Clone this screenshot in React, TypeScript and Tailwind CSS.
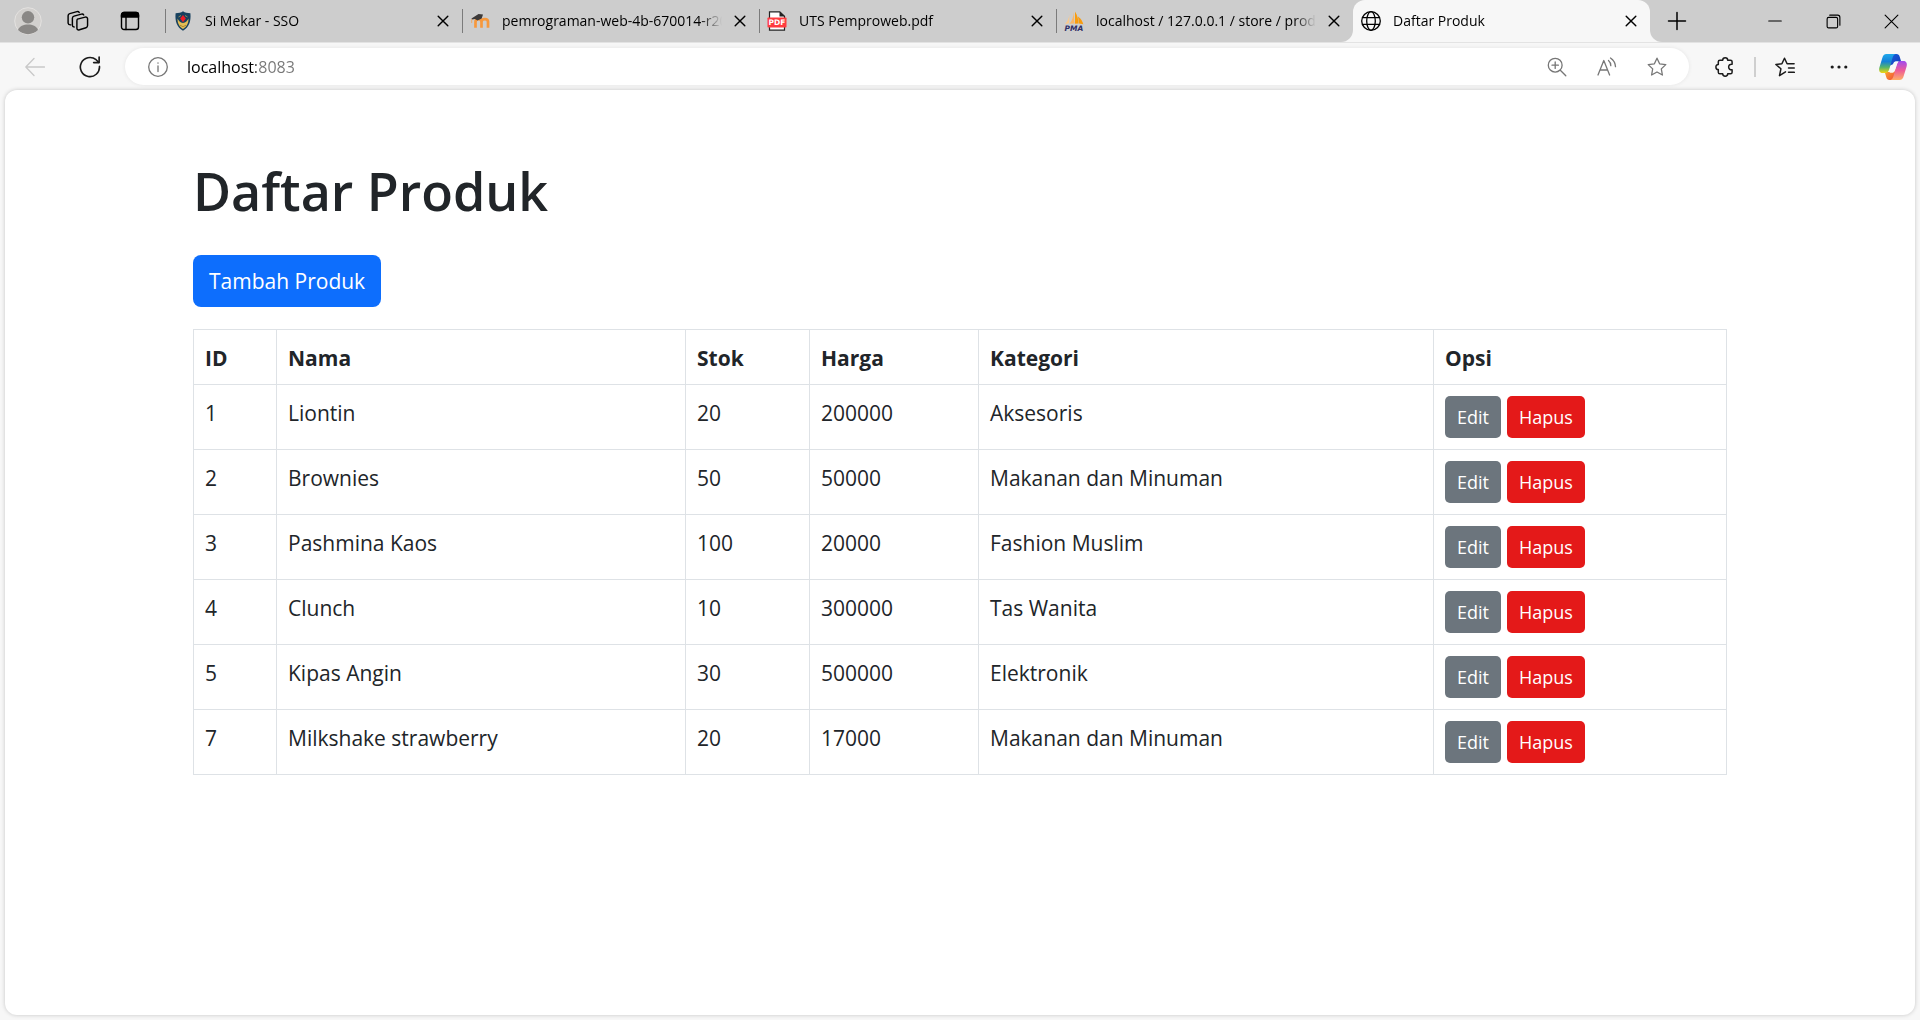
import type { ReactNode } from "react";

type Product = { id: number; name: string; stock: number; price: number; category: string };

const products: Product[] = [
  { id: 1, name: "Liontin", stock: 20, price: 200000, category: "Aksesoris" },
  { id: 2, name: "Brownies", stock: 50, price: 50000, category: "Makanan dan Minuman" },
  { id: 3, name: "Pashmina Kaos", stock: 100, price: 20000, category: "Fashion Muslim" },
  { id: 4, name: "Clunch", stock: 10, price: 300000, category: "Tas Wanita" },
  { id: 5, name: "Kipas Angin", stock: 30, price: 500000, category: "Elektronik" },
  { id: 7, name: "Milkshake strawberry", stock: 20, price: 17000, category: "Makanan dan Minuman" },
];

function Icon({ size = 20, width = 1.4, children }: { size?: number; width?: number; children: ReactNode }) {
  return (
    <svg
      width={size}
      height={size}
      viewBox="0 0 20 20"
      fill="none"
      stroke="currentColor"
      strokeWidth={width}
      strokeLinecap="round"
      strokeLinejoin="round"
      aria-hidden="true"
      className="shrink-0"
    >
      {children}
    </svg>
  );
}

const STAR = "M10 1.2 12.6 6.8 18.8 7.6 14.3 11.9 15.4 18 10 15 4.6 18 5.7 11.9 1.2 7.6 7.4 6.8Z";

function ShieldLogo() {
  return (
    <svg width="20" height="20" viewBox="0 0 20 20" aria-hidden="true" className="shrink-0">
      <path d="M10 .3c2 1.600 4.300 1.900 7.400 1.900.8 8-1.400 14-7.400 17.500C4 16.200 1.800 10.200 2.600 2.200 5.700 2.200 8 1.900 10 .3Z" fill="#17415f" />
      <path d="M4.600 7.500c.8 2 2.700 4.500 5.400 4.500s4.600-2.500 5.400-4.500c.4 4-1.400 8.200-5.400 10.400C6 15.700 4.200 11.500 4.600 7.500Z" fill="#e3bd55" />
      <path d="M5.500 6 8 4.500M14.500 6 12 4.500" stroke="#8d8a5c" strokeWidth="1" />
      <path d="m10 4 2.800 3.600L10 11.200 7.200 7.600Z" fill="#ee1c25" />
      <path d="M7 14.200l3 1.500 3-1.500" stroke="#9b7a2a" strokeWidth=".8" fill="none" />
    </svg>
  );
}

function MoodleLogo() {
  return (
    <svg width="20" height="20" viewBox="0 0 20 20" aria-hidden="true" className="shrink-0">
      <path d="M5.500 16.800v-6c0-3.600 6-3.600 6 0v6M11.500 10.800c0-3.600 6.500-3.600 6.500 0v6" fill="none" stroke="#f7983c" strokeWidth="2.700" />
      <path d="M1.500 7.500 8.500 3l4.500.6-1.300 4-4.200 2-2.500-1.600-3 .6Z" fill="#3d3a39" />
      <path d="M1.700 8v4" stroke="#e9a96c" strokeWidth="1" />
    </svg>
  );
}

function PdfLogo() {
  return (
    <svg width="20" height="20" viewBox="0 0 20 20" aria-hidden="true" className="shrink-0">
      <path d="M2.500.8h10.300l4.700 4.500v13.900h-15Z" fill="#fff" stroke="#222" strokeWidth="1.200" />
      <path d="M12.500.8v4.700h5Z" fill="#222" />
      <rect x=".5" y="6.500" width="19" height="10" rx=".8" fill="#ff3b3f" />
      <text x="10" y="14.200" textAnchor="middle" fontSize="7.500" fontWeight="700" fill="#fff" fontFamily="DejaVu Sans, sans-serif">PDF</text>
    </svg>
  );
}

function PmaLogo() {
  return (
    <svg width="20" height="20" viewBox="0 0 20 20" aria-hidden="true" className="shrink-0">
      <path d="M5.500 3.500C5 7 3.500 10.500 1 13.200l4-1Z" fill="#fbc98c" />
      <path d="M9.500 1C9.500 6 8 10 5.500 12.800l5-.3Z" fill="#fbb765" />
      <path d="M11 .5c2.500 4 3.500 8.500 3.600 12l-3.600.2Z" fill="#f89c0e" />
      <path d="M14 5.500c3 2 4.500 5 5.300 7.700l-4.300-.6Z" fill="#f89c0e" />
      <text x="10" y="19.500" textAnchor="middle" fontSize="7.500" fontWeight="700" fontStyle="italic" fill="#2f2f66" fontFamily="DejaVu Sans, sans-serif">PMA</text>
    </svg>
  );
}

function Globe() {
  return (
    <Icon width={1.3}>
      <circle cx="10" cy="10" r="9.300" />
      <ellipse cx="10" cy="10" rx="4.300" ry="9.300" />
      <path d="M1.500 6.700h17M1.500 13.300h17" />
    </Icon>
  );
}

function CopilotLogo() {
  return (
    <svg width="30" height="30" viewBox="0 0 30 30" aria-hidden="true">
      <defs>
        <linearGradient id="cpA" x1="0" y1="0" x2="0" y2="1">
          <stop offset="0" stopColor="#1fa8ea" />
          <stop offset=".4" stopColor="#1481d8" />
          <stop offset=".7" stopColor="#55b56a" />
          <stop offset="1" stopColor="#f5d511" />
        </linearGradient>
        <linearGradient id="cpB" x1="0" y1="0" x2="0" y2="1">
          <stop offset="0" stopColor="#a04af0" />
          <stop offset=".5" stopColor="#ee5c98" />
          <stop offset="1" stopColor="#ffb066" />
        </linearGradient>
        <linearGradient id="cpC" x1="0" y1="0" x2="1" y2="1">
          <stop offset="0" stopColor="#1560dc" />
          <stop offset="1" stopColor="#1838b8" />
        </linearGradient>
        <linearGradient id="cpD" x1="0" y1="0" x2="1" y2="1">
          <stop offset="0" stopColor="#ffb52e" />
          <stop offset="1" stopColor="#ee4438" />
        </linearGradient>
      </defs>
      <path d="M12 2h6.500c1.800 0 2.700 1 3.200 2.700L23.300 10H19c-2 0-3 0-3.600 2l-4.400 2Z" fill="url(#cpC)" />
      <path d="M18 28h-6.500c-1.800 0-2.700-1-3.200-2.700L6.700 20H11c2 0 3 0 3.600-2l4.400-2Z" fill="url(#cpD)" />
      <path d="M8.500 2h9c-2 .5-2.600 2.500-3.300 5l-2.700 9.500C10.600 19.600 9.500 21 7 21H4.500C1.500 21 .6 18.500 1.400 15.500L4.300 6C5 3.500 6.200 2 8.500 2Z" fill="url(#cpA)" />
      <path d="M21.500 28h-9c2-.5 2.600-2.500 3.300-5l2.700-9.500C19.400 10.400 20.500 9 23 9h2.500c3 0 3.900 2.500 3.100 5.500L25.700 24c-.7 2.500-1.900 4-4.200 4Z" fill="url(#cpB)" />
      <path d="M15.500 11.200c.5-1.500 1.500-2 3.500-2h2c-1.300.8-2 2.300-2.500 4.300l-1.500 5c-.6 1.800-1.500 2.300-3.500 2.300h-2.200c1.300-.8 1.900-2 2.400-3.800Z" fill="#f7f7f7" />
    </svg>
  );
}

const tabs: { title: string; logo: ReactNode }[] = [
  { title: "Si Mekar - SSO", logo: <ShieldLogo /> },
  { title: "pemrograman-web-4b-670014-r2024", logo: <MoodleLogo /> },
  { title: "UTS Pemproweb.pdf", logo: <PdfLogo /> },
  { title: "localhost / 127.0.0.1 / store / product", logo: <PmaLogo /> },
];

function TabBody({ title, logo }: { title: string; logo: ReactNode }) {
  return (
    <>
      {logo}
      <span className="ml-3 min-w-0 flex-1 overflow-hidden whitespace-nowrap mask-r-from-90% text-sm leading-5">{title}</span>
      <button aria-label={`Tutup ${title}`} className="ml-2 flex size-5 shrink-0 items-center justify-center">
        <Icon size={12} width={2.4}>
          <path d="M2 2l16 16M18 2 2 18" />
        </Icon>
      </button>
    </>
  );
}

function ToolButton({ label, className, children }: { label: string; className: string; children: ReactNode }) {
  return (
    <button aria-label={label} className={`flex h-full shrink-0 items-center justify-center ${className}`}>
      {children}
    </button>
  );
}

function TabStrip() {
  return (
    <div className="flex h-[42px] bg-[#cdcdcd] text-black">
      <div className="flex w-[165px] shrink-0 pl-[3px]">
        <ToolButton label="Profil" className="w-[50px]">
          <svg width="28" height="28" viewBox="0 0 28 28" aria-hidden="true">
            <circle cx="14" cy="14" r="13.300" fill="#d2d0ce" stroke="#e4e2e0" strokeWidth="1" />
            <circle cx="14" cy="10.300" r="6.200" fill="#8a8886" />
            <path d="M4 23c1.500-4 5.500-5.500 10-5.500S22.500 19 24 23c-5 5.500-15 5.500-20 0Z" fill="#8a8886" />
          </svg>
        </ToolButton>
        <ToolButton label="Ruang kerja" className="w-[50px]">
          <Icon size={22} width={1.3}>
            <path d="m9.500 8.300 7-1.800c1.200-.3 2 .3 2.200 1.300v6.400c0 1-.4 1.600-1.400 1.900l-6 1.900c-1.400.4-2.300-.2-2.300-1.500V10c0-1 .2-1.500.5-1.700Z" />
            <path d="M6.500 15.500c-1 0-1.600-.6-1.600-1.600V7.600c0-1 .5-1.700 1.500-2l6.700-1.900c1-.3 1.700 0 2.100.8" />
            <path d="M3.500 13.500c-1.400.1-2.300-.5-2.500-1.600V5.300c0-1 .5-1.700 1.500-2L9 1.500c1-.3 1.700 0 2.100.8" />
          </Icon>
        </ToolButton>
        <ToolButton label="Menu tab" className="w-[54px]">
          <Icon width={1.4}>
            <rect x="1.500" y="1.500" width="17" height="17" rx="2.500" />
            <path d="M1.500 6V4c0-1.500 1-2.500 2.500-2.500h12c1.500 0 2.500 1 2.500 2.500v2Z" fill="currentColor" />
            <path d="M6 6v12.500" />
          </Icon>
        </ToolButton>
      </div>
      {tabs.map((t) => (
        <div key={t.title} className="flex h-full w-[297px] min-w-0 items-center">
          <span className="h-6 w-px shrink-0 bg-[#7b7b7b]" />
          <div className="flex h-full min-w-0 flex-1 items-center pr-[9px] pl-[7px]">
            <TabBody title={t.title} logo={t.logo} />
          </div>
        </div>
      ))}
      <div className="relative flex h-full w-[297px] min-w-0 items-center rounded-t-xl bg-[#f7f7f7] pr-[9px] pl-2">
        <span className="absolute bottom-0 -left-3 size-3 bg-[#f7f7f7]">
          <span className="block size-full rounded-br-xl bg-[#cdcdcd]" />
        </span>
        <span className="absolute -right-3 bottom-0 size-3 bg-[#f7f7f7]">
          <span className="block size-full rounded-bl-xl bg-[#cdcdcd]" />
        </span>
        <TabBody title="Daftar Produk" logo={<Globe />} />
      </div>
      <ToolButton label="Tab baru" className="w-[54px]">
        <Icon width={1.5}>
          <path d="M10 1.500v17M1.500 10h17" />
        </Icon>
      </ToolButton>
      <div className="ml-auto flex">
        <ToolButton label="Kecilkan" className="w-[58px]">
          <Icon size={14} width={1.5}>
            <path d="M1 10h18" />
          </Icon>
        </ToolButton>
        <ToolButton label="Pulihkan" className="w-[58px]">
          <Icon size={15} width={1.5}>
            <rect x="1.500" y="4.500" width="14" height="14" rx="2" />
            <path d="M5 1.500h10.500c2 0 3 1 3 3V15" />
          </Icon>
        </ToolButton>
        <ToolButton label="Tutup" className="w-[58px]">
          <Icon size={15} width={1.5}>
            <path d="M1.500 1.500l17 17M18.500 1.500l-17 17" />
          </Icon>
        </ToolButton>
      </div>
    </div>
  );
}

function Toolbar() {
  return (
    <div className="flex h-12 items-center border-t border-[#e3e3e3] pr-[2px] text-[#1b1b1b]">
      <ToolButton label="Kembali" className="w-[70px] text-[#c9c9c9]">
        <Icon width={1.3}>
          <path d="M19.500 10H.8M9 1.500.8 10 9 18.500" />
        </Icon>
      </ToolButton>
      <ToolButton label="Muat ulang" className="mr-[15px] w-10">
        <Icon size={22} width={1.5}>
          <path d="M18.600 9.500A8.700 8.700 0 1 1 15.500 3.400L18 5.800" />
          <path d="M18.300 1v5h-5" />
        </Icon>
      </ToolButton>
      <div className="flex h-[37px] min-w-0 flex-1 items-center rounded-full bg-white pr-[7px] text-[#767676] shadow-[0_0_4px_rgba(0,0,0,0.08)]">
        <ToolButton label="Informasi situs" className="w-[62px] pl-[3px]">
          <Icon width={1.3}>
            <circle cx="10" cy="10" r="9.300" />
            <path d="M10 9v5.500M10 5.800v.4" />
          </Icon>
        </ToolButton>
        <input
          aria-label="Alamat"
          defaultValue="localhost:8083"
          className="min-w-0 flex-1 bg-linear-to-r from-black from-[69px] to-[#767676] to-[69px] bg-clip-text text-base leading-6 text-transparent outline-none"
        />
        <ToolButton label="Perbesar" className="w-[50px]">
          <Icon width={1.3}>
            <circle cx="8.200" cy="8.200" r="6.900" />
            <path d="m13.300 13.300 5.500 5.500M8.200 5v6.400M5 8.200h6.400" />
          </Icon>
        </ToolButton>
        <ToolButton label="Baca nyaring" className="w-[50px]">
          <Icon width={1.3}>
            <path d="M1 18 6.800 3.500 12.600 18M3 13h7.600M11.500 3.500c1.500 1.300 2.300 3 2.300 5.200M13.500 1c2.900 2 4.800 5 5 8.700" />
          </Icon>
        </ToolButton>
        <ToolButton label="Tambahkan ke favorit" className="w-[50px]">
          <Icon width={1.3}>
            <path d={STAR} />
          </Icon>
        </ToolButton>
      </div>
      <ToolButton label="Ekstensi" className="ml-3 w-12">
        <Icon width={1.5}>
          <path d="M7.700 3.200c0-3.200 5-3.200 5 0h2.800c1 0 1.600.6 1.600 1.600v2.400c-4.600-.6-4.600 6.200 0 5.600v2.400c0 1-.6 1.600-1.600 1.600h-2.800c0 3.200-5 3.200-5 0H4.900c-1 0-1.600-.6-1.600-1.600v-2.600c-3.200 0-3.200-5.200 0-5.200V4.800c0-1 .6-1.600 1.600-1.600Z" />
        </Icon>
      </ToolButton>
      <span className="mx-[5px] h-5 w-0.5 shrink-0 bg-[#cfcfcf]" />
      <ToolButton label="Favorit" className="w-12">
        <Icon width={1.5}>
          <path d="M10.500 14.800 4.500 18.700l1.400-6.900L.9 7.500l6-.8L9.500 1.200l2.600 5.500h7M13.500 11h5.800M13.500 15.300h5.800" />
        </Icon>
      </ToolButton>
      <ToolButton label="Lainnya" className="ml-[6px] w-12">
        <svg width="20" height="20" viewBox="0 0 20 20" fill="currentColor" aria-hidden="true">
          <circle cx="3.200" cy="10" r="1.600" />
          <circle cx="10" cy="10" r="1.600" />
          <circle cx="16.800" cy="10" r="1.600" />
        </svg>
      </ToolButton>
      <ToolButton label="Copilot" className="ml-[5px] w-[50px]">
        <CopilotLogo />
      </ToolButton>
    </div>
  );
}

const cell = "border border-[#dee2e6] px-[11px] text-left align-top";

function ProductTable() {
  return (
    <table className="mt-[22px] w-full table-fixed border-collapse text-[21px] leading-[33px]">
      <colgroup>
        <col className="w-[83px]" />
        <col className="w-[409px]" />
        <col className="w-[124px]" />
        <col className="w-[169px]" />
        <col className="w-[455px]" />
        <col />
      </colgroup>
      <thead>
        <tr>
          {["ID", "Nama", "Stok", "Harga", "Kategori", "Opsi"].map((h) => (
            <th key={h} scope="col" className={`${cell} pt-3 pb-[9px] font-bold`}>
              {h}
            </th>
          ))}
        </tr>
      </thead>
      <tbody>
        {products.map((p) => (
          <tr key={p.id}>
            {[p.id, p.name, p.stock, p.price, p.category].map((v, i) => (
              <td key={i} className={`${cell} py-3`}>
                {v}
              </td>
            ))}
            <td className={`${cell} py-[11px]`}>
              <div className="flex gap-[6px] text-lg leading-[42px] text-white">
                <button className="h-[42px] rounded-[5px] bg-[#6c757d] px-3">Edit</button>
                <button className="h-[42px] rounded-[5px] bg-[#e41919] px-3">Hapus</button>
              </div>
            </td>
          </tr>
        ))}
      </tbody>
    </table>
  );
}

export default function App() {
  return (
    <div className="flex min-h-screen flex-col bg-[#f7f7f7] font-['Open_Sans','Noto_Sans',sans-serif]">
      <TabStrip />
      <Toolbar />
      <main className="mx-[5px] mb-[5px] flex-1 rounded-xl bg-white pt-[67px] pb-12 text-[#212529] shadow-[0_0_4px_rgba(0,0,0,0.2)]">
        <div className="mx-auto max-w-[1534px]">
          <h1 className="text-[52px] leading-[67px] font-semibold">Daftar Produk</h1>
          <button className="mt-[31px] block h-[52px] rounded-lg bg-[#0d6efd] px-4 text-[21px] leading-[52px] text-white">
            Tambah Produk
          </button>
          <ProductTable />
        </div>
      </main>
    </div>
  );
}
